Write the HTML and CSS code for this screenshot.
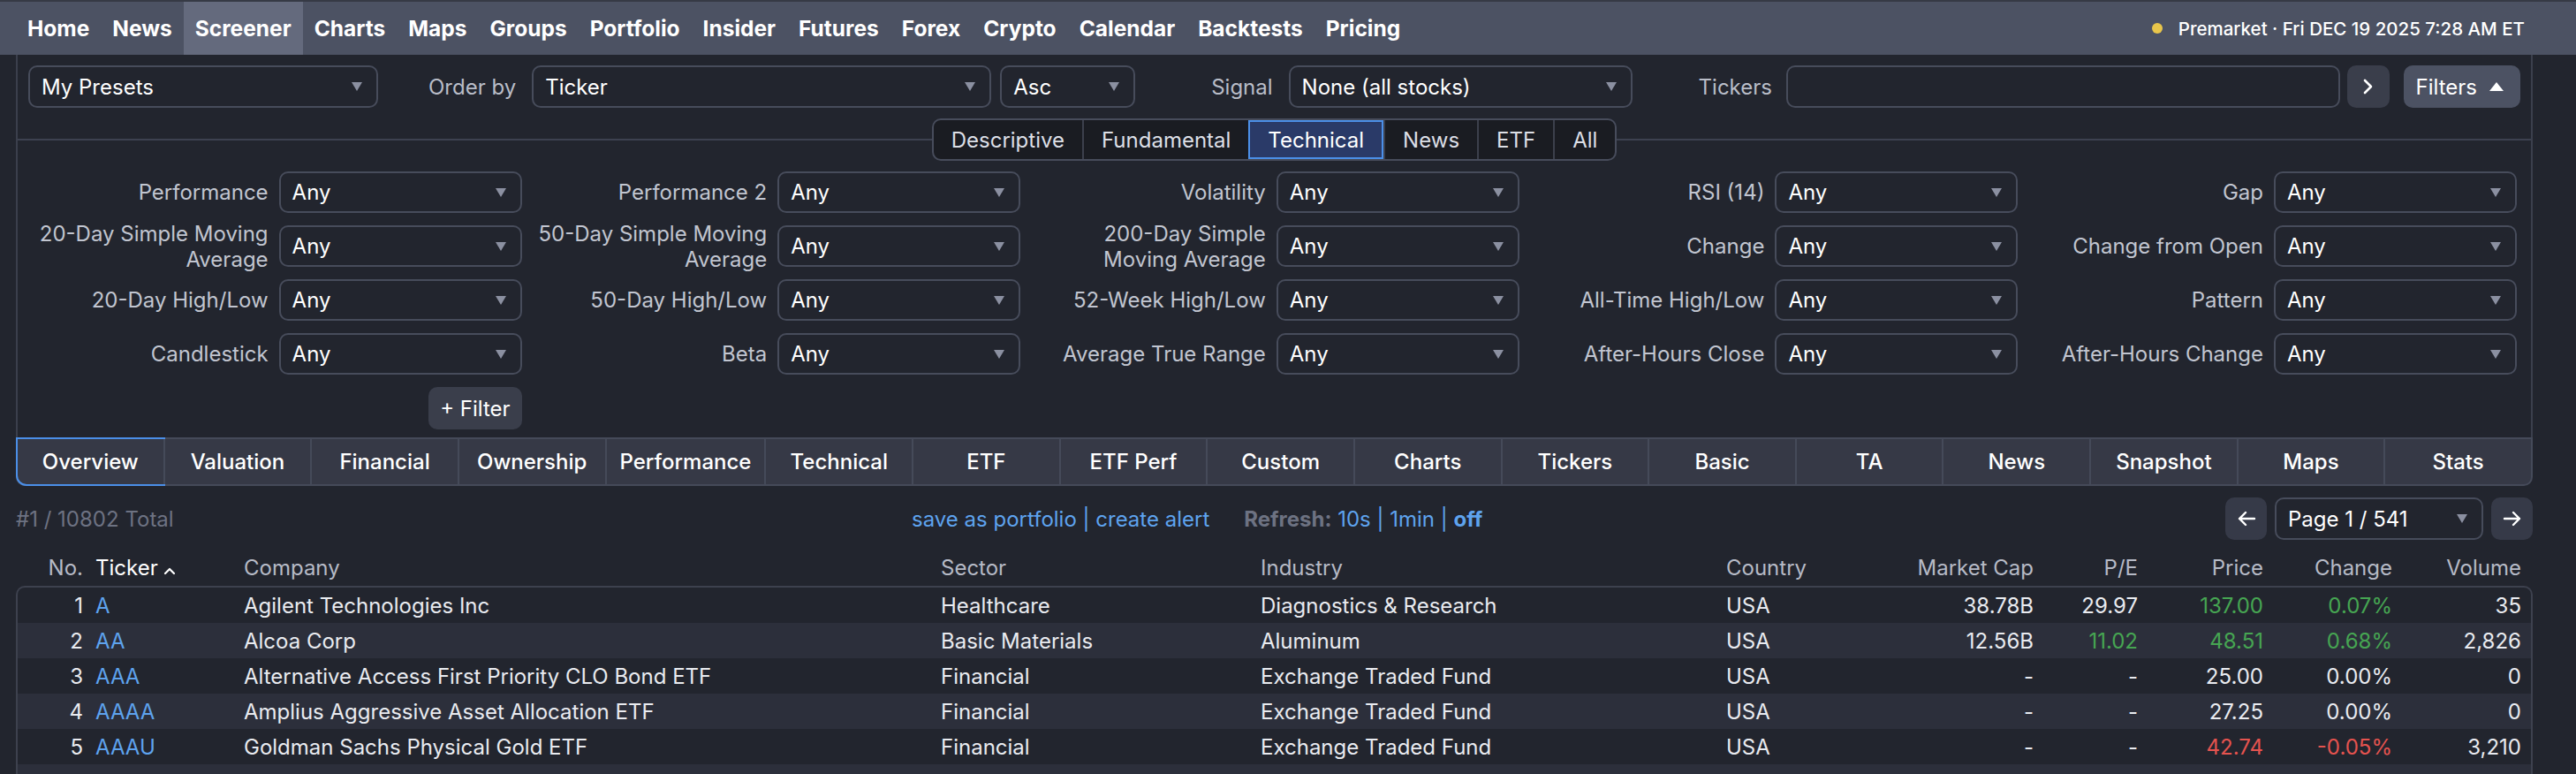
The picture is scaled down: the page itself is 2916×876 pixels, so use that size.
FILE: index.html
```html
<!DOCTYPE html>
<html lang="en">
<head>
    <meta charset="UTF-8">
    <title>Stock Screener</title>
    <link rel="stylesheet" href="styles.css">
</head>
<body>
<!-- Top navigation -->
<nav class="topbar">
    <ul class="nav-links">
        <li><a href="#">Home</a></li>
        <li><a href="#">News</a></li>
        <li><a href="#" class="active">Screener</a></li>
        <li><a href="#">Charts</a></li>
        <li><a href="#">Maps</a></li>
        <li><a href="#">Groups</a></li>
        <li><a href="#">Portfolio</a></li>
        <li><a href="#">Insider</a></li>
        <li><a href="#">Futures</a></li>
        <li><a href="#">Forex</a></li>
        <li><a href="#">Crypto</a></li>
        <li><a href="#">Calendar</a></li>
        <li><a href="#">Backtests</a></li>
        <li><a href="#">Pricing</a></li>
    </ul>
    <div class="market-status"><span class="status-dot"></span>Premarket · Fri DEC 19 2025 7:28 AM ET</div>
</nav>

<div class="page">
    <!-- Filter panel -->
    <div class="filter-panel">
        <div class="controls">
            <div class="select presets"><span>My Presets</span><i class="caret"></i></div>
            <span class="ctl-label order-label">Order by</span>
            <div class="select order"><span>Ticker</span><i class="caret"></i></div>
            <div class="select direction"><span>Asc</span><i class="caret"></i></div>
            <span class="ctl-label signal-label">Signal</span>
            <div class="select signal"><span>None (all stocks)</span><i class="caret"></i></div>
            <span class="ctl-label tickers-label">Tickers</span>
            <input type="text" class="tickers-input">
            <button type="button" class="btn-go">
                <svg width="14" height="20" viewBox="0 0 14 20"><polyline points="3,3 10,10 3,17" fill="none" stroke="#fff" stroke-width="2.6" stroke-linecap="round" stroke-linejoin="round"/></svg>
            </button>
            <button type="button" class="btn-filters">Filters <i class="caret-up"></i></button>
        </div>

        <div class="category-row">
            <span class="rule"></span>
            <div class="category-tabs">
                <a href="#">Descriptive</a>
                <a href="#">Fundamental</a>
                <a href="#" class="active">Technical</a>
                <a href="#">News</a>
                <a href="#">ETF</a>
                <a href="#">All</a>
            </div>
            <span class="rule"></span>
        </div>

        <div class="filters-grid">
            <div class="filter"><span class="filter-label">Performance</span><div class="select"><span>Any</span><i class="caret"></i></div></div>
            <div class="filter"><span class="filter-label">Performance 2</span><div class="select"><span>Any</span><i class="caret"></i></div></div>
            <div class="filter"><span class="filter-label">Volatility</span><div class="select"><span>Any</span><i class="caret"></i></div></div>
            <div class="filter"><span class="filter-label">RSI (14)</span><div class="select"><span>Any</span><i class="caret"></i></div></div>
            <div class="filter"><span class="filter-label">Gap</span><div class="select"><span>Any</span><i class="caret"></i></div></div>

            <div class="filter"><span class="filter-label">20-Day Simple Moving Average</span><div class="select"><span>Any</span><i class="caret"></i></div></div>
            <div class="filter"><span class="filter-label">50-Day Simple Moving Average</span><div class="select"><span>Any</span><i class="caret"></i></div></div>
            <div class="filter"><span class="filter-label">200-Day Simple Moving Average</span><div class="select"><span>Any</span><i class="caret"></i></div></div>
            <div class="filter"><span class="filter-label">Change</span><div class="select"><span>Any</span><i class="caret"></i></div></div>
            <div class="filter"><span class="filter-label">Change from Open</span><div class="select"><span>Any</span><i class="caret"></i></div></div>

            <div class="filter"><span class="filter-label">20-Day High/Low</span><div class="select"><span>Any</span><i class="caret"></i></div></div>
            <div class="filter"><span class="filter-label">50-Day High/Low</span><div class="select"><span>Any</span><i class="caret"></i></div></div>
            <div class="filter"><span class="filter-label">52-Week High/Low</span><div class="select"><span>Any</span><i class="caret"></i></div></div>
            <div class="filter"><span class="filter-label">All-Time High/Low</span><div class="select"><span>Any</span><i class="caret"></i></div></div>
            <div class="filter"><span class="filter-label">Pattern</span><div class="select"><span>Any</span><i class="caret"></i></div></div>

            <div class="filter"><span class="filter-label">Candlestick</span><div class="select"><span>Any</span><i class="caret"></i></div></div>
            <div class="filter"><span class="filter-label">Beta</span><div class="select"><span>Any</span><i class="caret"></i></div></div>
            <div class="filter"><span class="filter-label">Average True Range</span><div class="select"><span>Any</span><i class="caret"></i></div></div>
            <div class="filter"><span class="filter-label">After-Hours Close</span><div class="select"><span>Any</span><i class="caret"></i></div></div>
            <div class="filter"><span class="filter-label">After-Hours Change</span><div class="select"><span>Any</span><i class="caret"></i></div></div>

            <button type="button" class="btn-add">+ Filter</button>
        </div>
    </div>

    <!-- View tabs -->
    <div class="view-tabs">
        <a href="#" class="active">Overview</a>
        <a href="#">Valuation</a>
        <a href="#">Financial</a>
        <a href="#">Ownership</a>
        <a href="#">Performance</a>
        <a href="#">Technical</a>
        <a href="#">ETF</a>
        <a href="#">ETF Perf</a>
        <a href="#">Custom</a>
        <a href="#">Charts</a>
        <a href="#">Tickers</a>
        <a href="#">Basic</a>
        <a href="#">TA</a>
        <a href="#">News</a>
        <a href="#">Snapshot</a>
        <a href="#">Maps</a>
        <a href="#">Stats</a>
    </div>

    <!-- Result toolbar -->
    <div class="toolbar">
        <span class="total">#1 / 10802 Total</span>
        <div class="toolbar-links">
            <span class="links"><a href="#">save as portfolio</a> | <a href="#">create alert</a></span>
            <span class="refresh"><b>Refresh:</b> <a href="#">10s</a> | <a href="#">1min</a> | <a href="#" class="current">off</a></span>
        </div>
        <div class="pager">
            <button type="button" class="btn-page">
                <svg width="24" height="20" viewBox="0 0 24 20"><path d="M21 10H4M11 3L4 10l7 7" fill="none" stroke="#fff" stroke-width="2.4" stroke-linecap="round" stroke-linejoin="round"/></svg>
            </button>
            <div class="select page-select"><span>Page 1 / 541</span><i class="caret"></i></div>
            <button type="button" class="btn-page">
                <svg width="24" height="20" viewBox="0 0 24 20"><path d="M3 10h17M13 3l7 7-7 7" fill="none" stroke="#fff" stroke-width="2.4" stroke-linecap="round" stroke-linejoin="round"/></svg>
            </button>
        </div>
    </div>

    <!-- Results -->
    <div class="results">
        <div class="row head">
            <span class="num">No.</span>
            <span class="sorted">Ticker <svg width="14" height="10" viewBox="0 0 14 10"><polyline points="2,8 7,3 12,8" fill="none" stroke="#fff" stroke-width="2.2" stroke-linecap="round" stroke-linejoin="round"/></svg></span>
            <span>Company</span>
            <span>Sector</span>
            <span>Industry</span>
            <span>Country</span>
            <span class="num">Market Cap</span>
            <span class="num">P/E</span>
            <span class="num">Price</span>
            <span class="num">Change</span>
            <span class="num">Volume</span>
        </div>
        <div class="rows" id="rows"></div>
    </div>
</div>

<script>
    var stocks = [
        [1, "A", "Agilent Technologies Inc", "Healthcare", "Diagnostics & Research", "USA", "38.78B", "29.97", "137.00", "0.07%", "35", "", "up", "up"],
        [2, "AA", "Alcoa Corp", "Basic Materials", "Aluminum", "USA", "12.56B", "11.02", "48.51", "0.68%", "2,826", "up", "up", "up"],
        [3, "AAA", "Alternative Access First Priority CLO Bond ETF", "Financial", "Exchange Traded Fund", "USA", "-", "-", "25.00", "0.00%", "0", "", "", ""],
        [4, "AAAA", "Amplius Aggressive Asset Allocation ETF", "Financial", "Exchange Traded Fund", "USA", "-", "-", "27.25", "0.00%", "0", "", "", ""],
        [5, "AAAU", "Goldman Sachs Physical Gold ETF", "Financial", "Exchange Traded Fund", "USA", "-", "-", "42.74", "-0.05%", "3,210", "", "down", "down"],
        [6, "AACB", "Artius II Acquisition Inc", "Financial", "Shell Companies", "USA", "-", "-", "10.05", "0.00%", "0", "", "", ""]
    ];

    var container = document.getElementById("rows");

    stocks.forEach(function(s) {
        var row = document.createElement("div");
        row.className = "row";

        var cells = [
            ["num", s[0]],
            ["ticker", s[1]],
            ["", s[2]],
            ["", s[3]],
            ["", s[4]],
            ["", s[5]],
            ["num", s[6]],
            ["num " + s[11], s[7]],
            ["num " + s[12], s[8]],
            ["num " + s[13], s[9]],
            ["num", s[10]]
        ];

        cells.forEach(function(c) {
            var cell = document.createElement(c[0] === "ticker" ? "a" : "span");
            cell.className = c[0];
            cell.textContent = c[1];
            row.appendChild(cell);
        });

        container.appendChild(row);
    });
</script>
</body>
</html>
```

FILE: styles.css
```css
/* Screener - dark theme */
body {
    margin: 0;
    background-color: #22252e;
    color: #e9ebf0;
    font-family: Inter, "Noto Sans", sans-serif;
    font-size: 24px;
    overflow: hidden;
}

a {
    color: inherit;
    text-decoration: none;
}

button {
    font-family: inherit;
    cursor: pointer;
}

/* Top navigation */
.topbar {
    display: flex;
    height: 60px;
    border-top: 2px solid #363a45;
    background-color: #4c5263;
    padding-left: 18px;
}

.nav-links {
    display: flex;
    list-style: none;
    margin: 0;
    padding: 0;
}

.nav-links a {
    display: flex;
    align-items: center;
    height: 100%;
    padding: 0 13px;
    color: #fff;
    font-size: 24.5px;
    font-weight: 700;
}

.nav-links a.active {
    background-color: #646a7d;
}

.market-status {
    display: flex;
    align-items: center;
    margin-left: auto;
    padding-right: 58px;
    color: #fff;
    font-size: 20.5px;
    font-weight: 500;
}

.status-dot {
    width: 12px;
    height: 12px;
    margin-right: 18px;
    border-radius: 50%;
    background-color: #e9c64b;
}

/* Page container */
.page {
    width: 2849px;
    margin-left: 18px;
}

.filter-panel {
    border-left: 2px solid #3b3f4c;
    border-right: 2px solid #3b3f4c;
    padding: 12px 0 10px;
}

/* Select look-alike */
.select {
    display: flex;
    align-items: center;
    justify-content: space-between;
    box-sizing: border-box;
    height: 48px;
    padding: 0 16px 0 13px;
    border: 2px solid #474c5b;
    border-radius: 10px;
    color: #fff;
    white-space: nowrap;
}

.caret {
    width: 0;
    height: 0;
    border-left: 6px solid transparent;
    border-right: 6px solid transparent;
    border-top: 10px solid #8b90a1;
}

/* First row of controls */
.controls {
    display: flex;
    align-items: center;
    padding: 0 12px;
}

.ctl-label {
    color: #b9bdc8;
}

.presets { width: 396px; }
.order-label { margin-left: 57px; }
.order { width: 520px; margin-left: 18px; }
.direction { width: 153px; margin-left: 10px; }
.signal-label { margin-left: 86px; }
.signal { width: 389px; margin-left: 18px; }
.tickers-label { margin-left: 75px; }

.tickers-input {
    flex: 1;
    box-sizing: border-box;
    height: 48px;
    margin-left: 16px;
    border: 2px solid #474c5b;
    border-radius: 10px;
    background: transparent;
}

.btn-go {
    display: flex;
    align-items: center;
    justify-content: center;
    width: 48px;
    height: 48px;
    margin-left: 8px;
    border: none;
    border-radius: 10px;
    background-color: #3a3e4b;
}

.btn-filters {
    display: flex;
    align-items: center;
    gap: 14px;
    height: 48px;
    margin-left: 16px;
    padding: 0 19px 0 14px;
    border: none;
    border-radius: 10px;
    background-color: #4c5263;
    color: #fff;
    font-size: 24px;
}

.caret-up {
    width: 0;
    height: 0;
    border-left: 8px solid transparent;
    border-right: 8px solid transparent;
    border-bottom: 10px solid #fff;
}

/* Filter category tabs */
.category-row {
    display: flex;
    align-items: center;
    margin-top: 12px;
}

.rule {
    flex: 1;
    height: 2px;
    background-color: #3d4150;
}

.category-tabs {
    display: flex;
    height: 48px;
    box-sizing: border-box;
    border: 2px solid #474c5b;
    border-radius: 10px;
    background-color: #1a1c22;
    overflow: hidden;
}

.category-tabs a {
    display: flex;
    align-items: center;
    padding: 0 20px;
    border-left: 2px solid #3c404c;
    color: #dcdfe6;
}

.category-tabs a:first-child {
    border-left: none;
}

.category-tabs a.active {
    border: 2px solid #4b8fe8;
    background-color: #2a3a68;
    color: #fff;
}

/* Filters grid */
.filters-grid {
    display: grid;
    grid-template-columns: repeat(5, 1fr);
    grid-auto-rows: 47px;
    column-gap: 12px;
    row-gap: 14px;
    margin-top: 12px;
    padding: 0 16px 0 18px;
}

.filter {
    display: grid;
    grid-template-columns: 1fr 275px;
    column-gap: 12px;
    align-items: center;
}

.filter .select {
    height: 47px;
}

.filter-label {
    margin: -6px 0;
    color: #c1c5d0;
    text-align: right;
    line-height: 29px;
}

.btn-add {
    justify-self: end;
    height: 48px;
    padding: 0 13px;
    border: none;
    border-radius: 10px;
    background-color: #3a3e4b;
    color: #fff;
    font-size: 24px;
}

/* View tabs */
.view-tabs {
    display: flex;
    height: 55px;
    box-sizing: border-box;
    border: 2px solid #454a59;
    border-radius: 0 0 10px 10px;
    background-color: #363946;
}

.view-tabs a {
    flex: 1 1 0;
    display: flex;
    align-items: center;
    justify-content: center;
    padding: 0 15px;
    border-left: 2px solid #454a59;
    color: #fff;
    font-weight: 500;
    white-space: nowrap;
}

.view-tabs a:first-child {
    border-left: none;
}

.view-tabs a.active {
    box-shadow: 0 0 0 2px #4b8fe8;
    border-radius: 0 0 0 10px;
}

/* Toolbar above the table */
.toolbar {
    display: grid;
    grid-template-columns: 1014px auto 1fr;
    align-items: center;
    height: 48px;
    margin-top: 13px;
}

.total {
    color: #6d7282;
}

.toolbar-links {
    display: flex;
    gap: 39px;
    color: #5ea3ee;
}

.refresh b {
    color: #6d7282;
}

.refresh .current {
    font-weight: 700;
}

.pager {
    display: flex;
    justify-content: flex-end;
    gap: 9px;
}

.btn-page {
    display: flex;
    align-items: center;
    justify-content: center;
    width: 47px;
    height: 48px;
    border: none;
    border-radius: 10px;
    background-color: #363a48;
}

.page-select {
    width: 236px;
}

/* Results table */
.results {
    margin-top: 11px;
}

.row {
    display: grid;
    grid-template-columns: 83px 168px 789px 362px 527px 200px 162px 118px 142px 146px 146px;
    align-items: center;
    height: 40px;
    white-space: nowrap;
}

.rows .row {
    grid-template-columns: 81px 168px 789px 362px 527px 200px 162px 118px 142px 146px 146px;
}

.row span,
.row a {
    padding: 0 7px;
    overflow: hidden;
}

.row .num {
    text-align: right;
}

.row.head {
    height: 41px;
    color: #b6bac6;
}

.row.head .sorted {
    color: #fff;
}

.rows {
    border: 2px solid #3d414e;
    border-bottom: none;
    border-radius: 10px 10px 0 0;
}

.rows .row:nth-child(even) {
    background-color: #2c2f3b;
}

.rows .ticker {
    color: #5ea3ee;
}

.up {
    color: #46a552;
}

.down {
    color: #e5534f;
}
```
